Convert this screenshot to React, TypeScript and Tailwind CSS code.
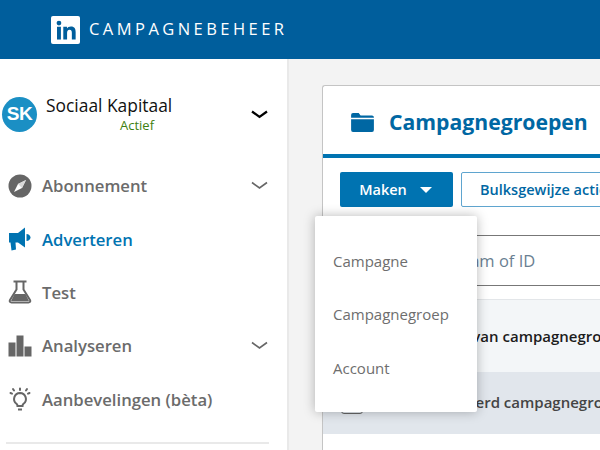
const FONT = { fontFamily: "'Open Sans', 'Noto Sans', sans-serif" };

function Chevron({ color, width = 1.6 }: { color: string; width?: number }) {
	return (
		<svg viewBox="0 0 17 9" className="h-[9px] w-[17px]" fill="none" stroke={color} strokeWidth={width}>
			<path d="M1 1.500 8.500 7 16 1.500" />
		</svg>
	);
}

function NavRow({ icon, label, active, chevron }: { icon: React.ReactNode; label: string; active?: boolean; chevron?: boolean }) {
	return (
		<div className="flex h-[53.4px] items-center pl-2 pr-[19px]">
			<div className="flex w-[34px] shrink-0 justify-start">{icon}</div>
			<span className={`flex-1 text-[16.7px] font-semibold ${active ? "text-[#0073b1]" : "text-[#6b6b6b]"}`}>{label}</span>
			{chevron && <Chevron color="#666666" />}
		</div>
	);
}

export default function App() {
	return (
		<div className="relative flex h-[450px] w-[600px] flex-col overflow-hidden bg-[#f3f3f3]" style={FONT}>
			<header className="flex h-[59px] shrink-0 items-center bg-[#005e9c] pl-[51px]">
				<div className="flex h-[28px] w-[29px] items-center justify-center rounded-[2px] bg-white">
					<svg viewBox="0 0 24 24" className="h-[26px] w-[26px]" fill="#005e9c">
						<circle cx="5.5" cy="5.6" r="2.2" />
						<rect x="3.7" y="9" width="3.600" height="11.800" />
						<path d="M9.500 9h3.400v1.600c.6-1 1.800-1.900 3.700-1.900 3.400 0 4.300 2.100 4.300 5.200v6.900h-3.500v-6.100c0-1.500-.3-2.900-2.100-2.900-1.800 0-2.300 1.300-2.300 2.900v6.100H9.500z" />
					</svg>
				</div>
				<span className="ml-[9px] text-[16.5px] tracking-[3.45px] text-white">CAMPAGNEBEHEER</span>
			</header>
			<div className="flex min-h-0 flex-1">
				<aside className="flex w-[289px] shrink-0 flex-col border-r-2 border-[#e9e9e9] bg-white">
					<div className="flex h-[100px] items-center pl-[2px] pr-[19px] pt-[10px]">
						<div className="flex h-[35px] w-[35px] shrink-0 items-center justify-center rounded-full bg-[#1b8fc4] text-[19px] font-bold tracking-[-0.5px] text-white" style={{ fontFamily: "'Liberation Sans', sans-serif" }}>
							SK
						</div>
						<div className="ml-[9px] flex-1">
							<div className="whitespace-nowrap text-[17.4px] leading-[20px] text-[#111111]">Sociaal Kapitaal</div>
							<div className="pl-[74px] pt-[1px] text-[13px] leading-[18px] text-[#3f7f10]">Actief</div>
						</div>
						<Chevron color="#000000" width={2.2} />
					</div>
					<NavRow
						label="Abonnement"
						chevron
						icon={
							<svg viewBox="0 0 24 24" className="h-[24px] w-[24px]">
								<circle cx="12" cy="12" r="11.500" fill="#666666" />
								<path d="M18 6 14 14 6 18 10 10z" fill="#fff" />
								<path d="M18 6 14 14 10 10z" fill="#d9d9d9" />
							</svg>
						}
					/>
					<NavRow
						active
						label="Adverteren"
						icon={
							<svg viewBox="0 0 24 24" className="h-[24px] w-[24px]" fill="#0073b1">
								<path d="M1 6h9v9.500H7.500L8 22.500 3.500 23.500 2.500 15.500H1z" />
								<path d="M10 6 17 0.500V20.500L10 15.500z" />
								<path d="M18.500 7c2 .2 4 1.500 4 3.500s-2 3.300-4 3.500z" />
							</svg>
						}
					/>
					<NavRow
						label="Test"
						icon={
							<svg viewBox="0 0 24 24" className="h-[24px] w-[24px]" fill="none" stroke="#666666" strokeWidth="2">
								<path d="M5.500 1.500h13" />
								<path d="M8.500 2v7.500L2 20c-.8 1.500 0 2.500 1.500 2.500h17c1.500 0 2.300-1 1.500-2.500L15.500 9.500V2" />
								<path d="M6.500 14h11L21 21H3z" fill="#666666" stroke="none" />
							</svg>
						}
					/>
					<NavRow
						label="Analyseren"
						chevron
						icon={
							<svg viewBox="0 0 24 24" className="h-[24px] w-[24px]" fill="#666666">
								<rect x="0.500" y="8.500" width="7" height="14" />
								<rect x="8.500" y="1.500" width="7" height="21" />
								<rect x="16.500" y="12.500" width="7" height="10" />
							</svg>
						}
					/>
					<NavRow
						label="Aanbevelingen (bèta)"
						icon={
							<svg viewBox="0 0 24 24" className="h-[25px] w-[24px]" fill="none" stroke="#666666" strokeWidth="2">
								<path d="M12 5.500a6 6 0 0 0-3.500 10.800c.8.700 1 1.300 1 2.200h5c0-.9.200-1.500 1-2.200A6 6 0 0 0 12 5.500z" />
								<path d="M10 22h4" />
								<path d="M12 1v1.500M5 1.500l1 1.500M19 1.500l-1 1.500M2.500 5.500l1.500.7M21.500 5.500l-1.500.7" strokeLinecap="round" />
							</svg>
						}
					/>
					<div className="ml-[6px] mr-[18px] mt-[16px] h-[2px] bg-[#e9e9e9]" />
				</aside>
				<main className="min-w-0 flex-1 pl-[33px] pt-[26px]">
					<section className="h-[400px] w-[320px] overflow-hidden rounded-tl-[3px] border-l border-t border-[#c4c4c4] bg-white">
						<div className="flex h-[68px] items-center pl-[28px] pt-[4px]">
							<svg viewBox="0 0 24 20" className="h-[19px] w-[23px]" fill="#0067a3">
								<path d="M0 2a2 2 0 0 1 2-2h6l2 2.500h12a2 2 0 0 1 2 2V5H0z" />
								<path d="M0 6.500h24V18a2 2 0 0 1-2 2H2a2 2 0 0 1-2-2z" />
							</svg>
							<h1 className="ml-[15px] whitespace-nowrap text-[21.2px] font-bold text-[#0067a3]">Campagnegroepen</h1>
						</div>
						<div className="h-[4px] bg-[#0073b1]" />
						<div className="flex h-[77px] items-start gap-[8px] pl-[17px] pt-[14px]">
							<button className="flex h-[35px] w-[113px] shrink-0 items-center justify-center rounded-[2px] bg-[#0073b1] pr-[2px] text-[14.5px] font-semibold text-white">
								Maken
								<span className="ml-[13px] h-0 w-0 border-x-[6px] border-t-[6px] border-x-transparent border-t-white" />
							</button>
							<button className="h-[35px] w-[200px] shrink-0 overflow-hidden whitespace-nowrap rounded-[2px] border border-[#5fa5cf] pl-[18px] text-left text-[14.5px] font-semibold text-[#0067a3]">
								Bulksgewijze acties
							</button>
						</div>
						<div className="flex h-[51px] items-center whitespace-nowrap border-y border-[#777777] pl-[62px] pt-[1px] text-[16.5px] text-[#6a7f92]">Zoek op naam of ID</div>
						<div className="mt-[13px] flex h-[73px] items-center whitespace-nowrap border-t border-[#e3e6e9] bg-[#f3f6f8] pl-[102px] text-[15px] font-semibold text-[#1c1c1c]">Naam van campagnegroep</div>
						<div className="flex h-[62px] items-center whitespace-nowrap bg-[#e1e6ec] pb-[2px] pl-[18px] text-[15px] font-semibold text-[#444444]">
							<span className="mt-[4px] h-[20px] w-[22px] shrink-0 rounded-[3px] border border-[#666666]" />
							<span className="ml-[40px]">Gearchiveerd campagnegroep</span>
						</div>
					</section>
				</main>
			</div>
			<div className="absolute left-[315px] top-[216px] flex h-[196px] w-[162px] flex-col justify-center rounded-[2px] bg-white pl-[18px] pt-[1px] text-[15px] text-[#6e6e6e] shadow-[0_0_12px_rgba(0,0,0,0.28)]">
				<div className="flex h-[53.500px] items-center">Campagne</div>
				<div className="flex h-[53.500px] items-center">Campagnegroep</div>
				<div className="flex h-[53.500px] items-center">Account</div>
			</div>
		</div>
	);
}
